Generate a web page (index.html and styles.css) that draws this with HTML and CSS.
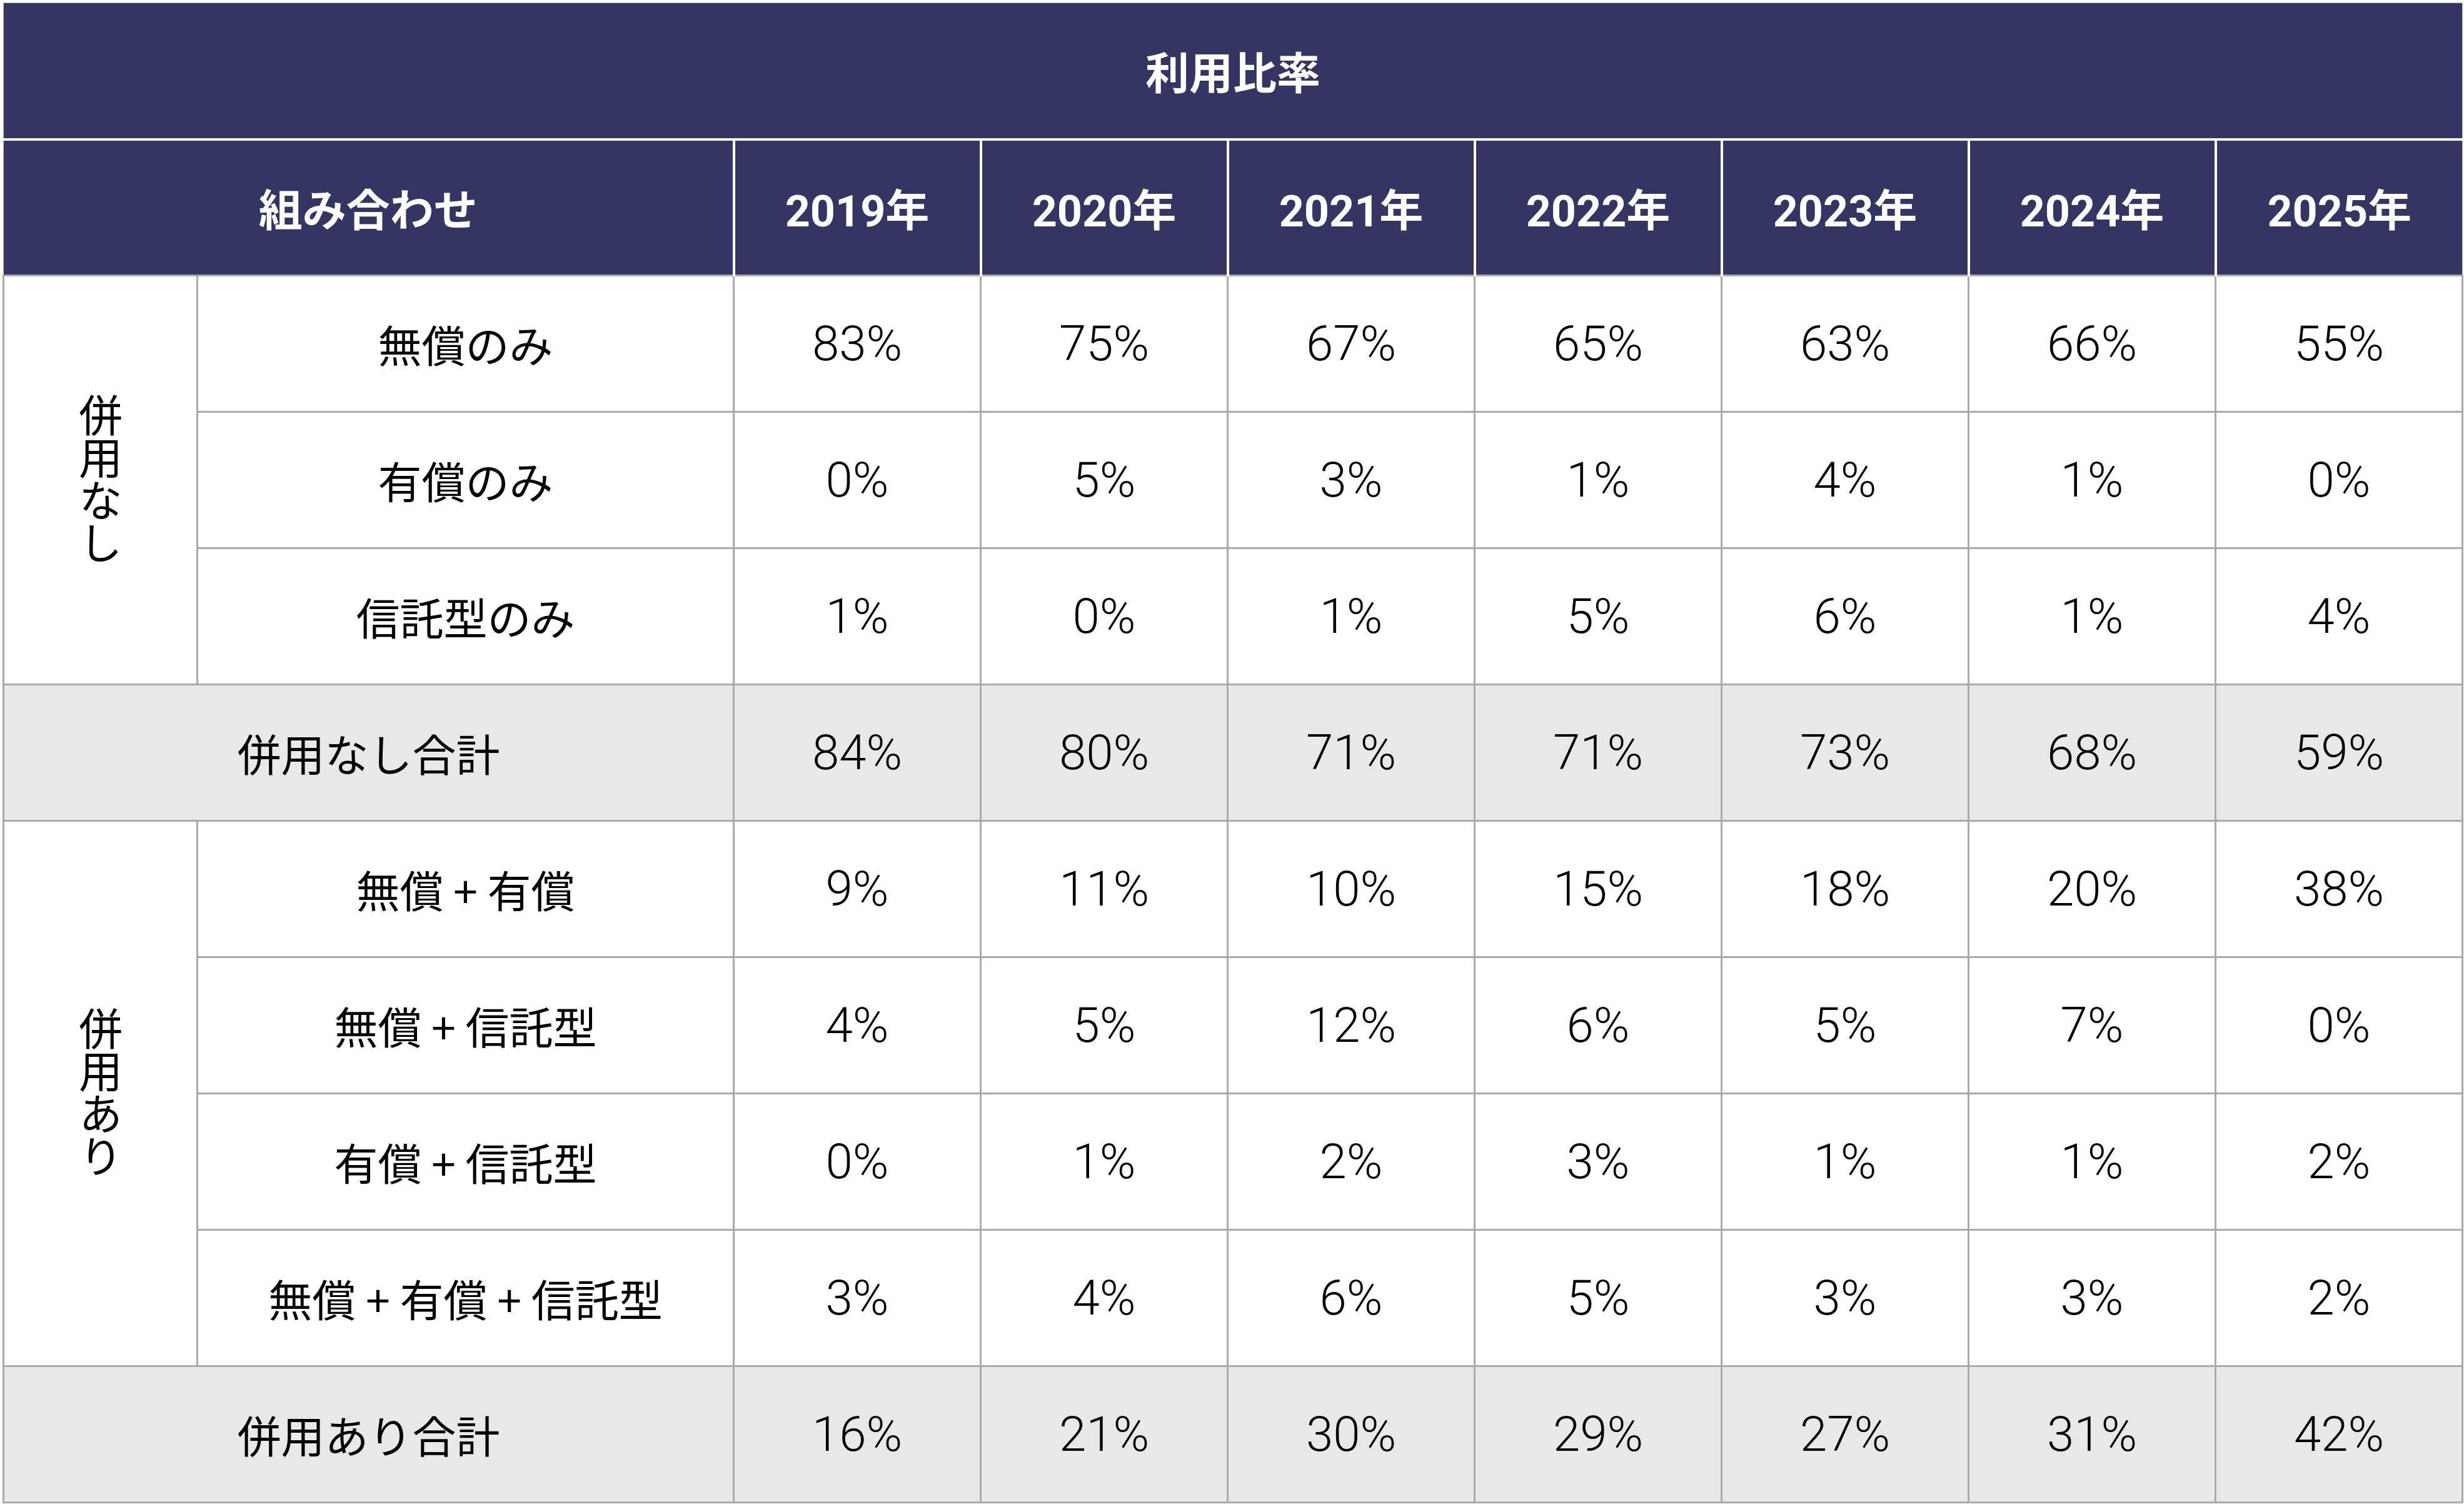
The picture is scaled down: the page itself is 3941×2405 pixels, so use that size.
FILE: index.html
```html
<!DOCTYPE html>
<html lang="ja">
<head>
<meta charset="utf-8">
<title>利用比率</title>
<link rel="stylesheet" href="styles.css">
</head>
<body>
<table class="ratio">
  <colgroup>
    <col class="c-group">
    <col class="c-sub">
    <col class="c-year"><col class="c-year"><col class="c-year"><col class="c-year"><col class="c-year"><col class="c-year"><col class="c-year">
  </colgroup>
  <thead>
    <tr class="title-row">
      <th colspan="9" class="title">利用比率</th>
    </tr>
    <tr class="head-row">
      <th colspan="2" class="head first">組み合わせ</th>
      <th class="head year">2019年</th>
      <th class="head year">2020年</th>
      <th class="head year">2021年</th>
      <th class="head year">2022年</th>
      <th class="head year">2023年</th>
      <th class="head year">2024年</th>
      <th class="head year last">2025年</th>
    </tr>
  </thead>
  <tbody>
    <tr>
      <th rowspan="3" class="group"><span class="vtext">併用なし</span></th>
      <td class="label">無償のみ</td>
      <td class="num">83%</td><td class="num">75%</td><td class="num">67%</td><td class="num">65%</td><td class="num">63%</td><td class="num">66%</td><td class="num">55%</td>
    </tr>
    <tr>
      <td class="label">有償のみ</td>
      <td class="num">0%</td><td class="num">5%</td><td class="num">3%</td><td class="num">1%</td><td class="num">4%</td><td class="num">1%</td><td class="num">0%</td>
    </tr>
    <tr>
      <td class="label">信託型のみ</td>
      <td class="num">1%</td><td class="num">0%</td><td class="num">1%</td><td class="num">5%</td><td class="num">6%</td><td class="num">1%</td><td class="num">4%</td>
    </tr>
    <tr class="total">
      <td colspan="2" class="label">併用なし合計</td>
      <td class="num">84%</td><td class="num">80%</td><td class="num">71%</td><td class="num">71%</td><td class="num">73%</td><td class="num">68%</td><td class="num">59%</td>
    </tr>
    <tr>
      <th rowspan="4" class="group"><span class="vtext">併用あり</span></th>
      <td class="label">無償 + 有償</td>
      <td class="num">9%</td><td class="num">11%</td><td class="num">10%</td><td class="num">15%</td><td class="num">18%</td><td class="num">20%</td><td class="num">38%</td>
    </tr>
    <tr>
      <td class="label">無償 + 信託型</td>
      <td class="num">4%</td><td class="num">5%</td><td class="num">12%</td><td class="num">6%</td><td class="num">5%</td><td class="num">7%</td><td class="num">0%</td>
    </tr>
    <tr>
      <td class="label">有償 + 信託型</td>
      <td class="num">0%</td><td class="num">1%</td><td class="num">2%</td><td class="num">3%</td><td class="num">1%</td><td class="num">1%</td><td class="num">2%</td>
    </tr>
    <tr>
      <td class="label">無償 + 有償 + 信託型</td>
      <td class="num">3%</td><td class="num">4%</td><td class="num">6%</td><td class="num">5%</td><td class="num">3%</td><td class="num">3%</td><td class="num">2%</td>
    </tr>
    <tr class="total">
      <td colspan="2" class="label">併用あり合計</td>
      <td class="num">16%</td><td class="num">21%</td><td class="num">30%</td><td class="num">29%</td><td class="num">27%</td><td class="num">31%</td><td class="num">42%</td>
    </tr>
  </tbody>
</table>
</body>
</html>
```

FILE: styles.css
```css
html, body {
  margin: 0;
  padding: 0;
  background: #ffffff;
}

body {
  padding: 4px 0 0 4px;
  font-family: "Noto Sans CJK JP", sans-serif;
  color: #000000;
}

.ratio {
  border-collapse: collapse;
  table-layout: fixed;
  width: 3935px;
}

.c-group { width: 310px; }
.c-sub { width: 858px; }
.c-year { width: 395px; }

.ratio th,
.ratio td {
  border: 3px solid #aaaaaa;
  padding: 0;
  text-align: center;
  vertical-align: middle;
}

.title-row { height: 218px; }
.head-row { height: 218px; }
.ratio tbody tr { height: 218px; }

.ratio thead th {
  background: #343563;
  color: #ffffff;
  border-color: #ffffff;
  border-width: 4px;
}

.ratio thead .title {
  font-family: "Noto Sans CJK JP", sans-serif;
  font-size: 70px;
  font-weight: 700;
  border-top: 1px solid #c4c4cc;
  border-left: 1px solid #c4c4cc;
  border-right: 1px solid #c4c4cc;
}

.ratio thead .head {
  font-size: 70px;
  font-weight: 700;
  border-bottom: 3px solid #aaaaaa;
}

.ratio thead .head.first {
  border-left: 1px solid #c4c4cc;
}

.ratio thead .head.last {
  border-right: 1px solid #c4c4cc;
}

.ratio thead .year {
  font-family: "Roboto", "Noto Sans CJK JP", sans-serif;
  font-size: 70px;
  font-weight: 700;
}

.group {
  font-weight: 400;
  background: #ffffff;
}

.vtext {
  display: inline-block;
  writing-mode: vertical-rl;
  text-orientation: upright;
  font-size: 70px;
  line-height: 1;
  letter-spacing: -2px;
}

.label {
  font-size: 70px;
  font-weight: 400;
}

.num {
  font-family: "Roboto", "Noto Sans CJK JP", sans-serif;
  font-size: 78px;
  font-weight: 300;
}

.total td {
  background: #e8e8e8;
}
```
